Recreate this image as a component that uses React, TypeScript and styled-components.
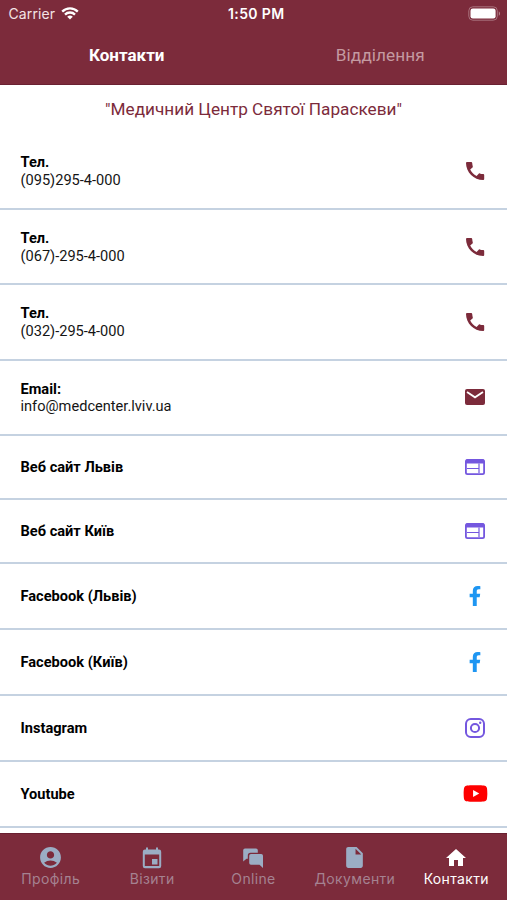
import React from "react";
import styled, { createGlobalStyle } from "styled-components";
import { MdAccountCircle, MdInsertDriveFile, MdHome } from "react-icons/md";
import { FaFacebookF, FaYoutube } from "react-icons/fa";

const Global = createGlobalStyle`
  * { box-sizing: border-box; }
  body { margin: 0; background: #fff; }
`;

const Screen = styled.div`
  width: 507px;
  height: 900px;
  display: flex;
  flex-direction: column;
  overflow: hidden;
  background: #fff;
  font-family: Roboto, sans-serif;
`;

const Header = styled.header`
  height: 84.5px;
  flex: none;
  background: #7c2b3b;
  border-bottom: 1px solid #6a2132;
`;

const StatusBar = styled.div`
  height: 27px;
  padding: 0 6px 0 8.5px;
  display: grid;
  grid-template-columns: 1fr auto 1fr;
  align-items: center;
  font-family: Inter, sans-serif;
  font-size: 14px;
  color: #f3e4e5;
`;

const Carrier = styled.div`
  display: flex;
  align-items: center;
  gap: 6px;
  letter-spacing: 0.1px;
`;

const Clock = styled.div`
  padding-left: 3px;
  font-weight: 600;
  letter-spacing: 0.35px;
  color: #fff;
`;

const Battery = styled.svg`
  justify-self: end;
  display: block;
`;

const TopTabs = styled.nav`
  height: 55px;
  display: grid;
  grid-template-columns: 1fr 1fr;
  align-items: center;
  text-align: center;
`;

const TopTab = styled.span<{ $active?: boolean }>`
  font-size: ${(p) => (p.$active ? "17px" : "17.2px")};
  letter-spacing: ${(p) => (p.$active ? "0" : "0.05px")};
  font-weight: ${(p) => (p.$active ? 700 : 400)};
  color: ${(p) => (p.$active ? "#fff" : "#c49aa1")};
`;

const Title = styled.h1`
  margin: 0;
  height: 49.5px;
  flex: none;
  line-height: 49px;
  text-align: center;
  font-size: 17.2px;
  font-weight: 400;
  color: #7c2b3b;
`;

const List = styled.div`
  flex: 1;
  min-height: 0;
`;

const Row = styled.div<{ $height: number }>`
  height: ${(p) => p.$height}px;
  padding: 0 19.5px 0 20.5px;
  display: flex;
  align-items: center;
  justify-content: space-between;
  border-bottom: 2px solid #c5d2e1;
`;

const RowText = styled.div`
  padding-top: 2px;
  font-size: 14.6px;
  line-height: 17.6px;
  color: #151515;
`;

const Label = styled.div`
  font-weight: 700;
  color: #000;
`;

const IconSlot = styled.div<{ $color: string }>`
  width: 25px;
  display: flex;
  justify-content: center;
  color: ${(p) => p.$color};
`;

const BottomBar = styled.nav`
  height: 67.5px;
  flex: none;
  padding-top: 12px;
  display: grid;
  grid-template-columns: repeat(5, 1fr);
  background: #7c2b3b;
  border-top: 1px solid #692031;
`;

const BottomTab = styled.div<{ $active?: boolean }>`
  display: flex;
  flex-direction: column;
  align-items: center;
  font-family: Inter, sans-serif;
  font-size: 14px;
  line-height: 17px;
  letter-spacing: 0.35px;
  white-space: nowrap;
  color: ${(p) => (p.$active ? "#fff" : "#a58291")};
  svg { color: ${(p) => (p.$active ? "#fff" : "#9badc4")}; }
`;

const TabIcon = styled.div`
  height: 24px;
  display: flex;
  align-items: center;
`;

const WifiIcon = () => (
  <svg width="18" height="13" viewBox="0 0 18 13" fill="none" stroke="#fff" strokeWidth="2.3">
    <path d="M1.2 4.6a11 11 0 0 1 15.6 0M4 7.6a7 7 0 0 1 10 0" />
    <path d="M9 12.6 6.2 9.8a4 4 0 0 1 5.6 0z" fill="#fff" stroke="none" />
  </svg>
);

const PhoneIcon = () => (
  <svg width="24" height="24" viewBox="0 0 24 24" fill="currentColor">
    <path d="M4 3h4.2a1 1 0 0 1 1 .9c.1 1.2.3 2.4.6 3.5.1.4 0 .8-.3 1L7.2 10.6c1.4 2.9 3.5 5 6.4 6.4l2.1-2.3c.3-.3.7-.4 1-.3 1.100.4 2.300.6 3.500.6a1 1 0 0 1 1 1V20a1 1 0 0 1-1 1C10.800 21 3 13.200 3 4a1 1 0 0 1 1-1z" />
  </svg>
);

const MailIcon = () => (
  <svg width="24" height="24" viewBox="0 0 24 24" fill="currentColor">
    <rect x="2" y="4" width="20" height="16" rx="2" />
    <path d="m4 7 8 5.300L20 7" fill="none" stroke="#fff" strokeWidth="1.8" />
  </svg>
);

const WebIcon = () => (
  <svg width="24" height="24" viewBox="0 0 24 24" fill="none" stroke="currentColor">
    <rect x="2.900" y="4.900" width="18.200" height="14.200" rx="1.600" strokeWidth="1.800" />
    <path d="M3 6.500h18" strokeWidth="4" />
    <path d="M4 13.500h12M16 8.500V18" strokeWidth="1.200" />
  </svg>
);

const InstagramIcon = () => (
  <svg width="20" height="20" viewBox="0 0 20 20" fill="none" stroke="currentColor" strokeWidth="2">
    <rect x="1" y="1" width="18" height="18" rx="4.800" />
    <circle cx="10" cy="10" r="4.100" />
    <circle cx="15.200" cy="4.800" r="1.200" fill="currentColor" stroke="none" />
  </svg>
);

const CalendarIcon = () => (
  <svg width="24" height="24" viewBox="0 0 24 24" fill="currentColor" fillRule="evenodd">
    <path d="M6 1.500h2v2h8v-2h2v2h1a2.200 2.200 0 0 1 2.200 2.200V20a2.200 2.200 0 0 1-2.200 2.200H5A2.200 2.200 0 0 1 2.800 20V5.700A2.200 2.200 0 0 1 5 3.500h1zM4.800 8.500V20h14.400V8.500zM12 13h5.500v5.500H12z" />
  </svg>
);

const ChatsIcon = () => (
  <svg width="24" height="24" viewBox="0 0 24 24" fill="currentColor">
    <path d="M4 2.500h11A1.800 1.800 0 0 1 16.800 4.300V6.800H9.500A2.700 2.700 0 0 0 6.800 9.500v3.300H5.500L2.200 15.500V4.300A1.800 1.800 0 0 1 4 2.500z" />
    <path d="M10 8h10.200A1.800 1.800 0 0 1 22 9.800V22l-3.500-3.200H10A1.800 1.800 0 0 1 8.200 17V9.800A1.800 1.800 0 0 1 10 8z" />
  </svg>
);

const WINE = "#7c2b3b";
const VIOLET = "#7457df";
const BLUE = "#1e96f2";

const rows = [
  { label: "Тел.", value: "(095)295-4-000", height: 76, color: WINE, icon: <PhoneIcon /> },
  { label: "Тел.", value: "(067)-295-4-000", height: 75.3, color: WINE, icon: <PhoneIcon /> },
  { label: "Тел.", value: "(032)-295-4-000", height: 75.3, color: WINE, icon: <PhoneIcon /> },
  { label: "Email:", value: "info@medcenter.lviv.ua", height: 75.3, color: WINE, icon: <MailIcon /> },
  { label: "Веб сайт Львів", height: 64, color: VIOLET, icon: <WebIcon /> },
  { label: "Веб сайт Київ", height: 64, color: VIOLET, icon: <WebIcon /> },
  { label: "Facebook (Львів)", height: 66, color: BLUE, icon: <FaFacebookF size={20} /> },
  { label: "Facebook (Київ)", height: 66, color: BLUE, icon: <FaFacebookF size={20} /> },
  { label: "Instagram", height: 66, color: VIOLET, icon: <InstagramIcon /> },
  { label: "Youtube", height: 66, color: "#fe0000", icon: <FaYoutube size={25} /> },
];

const tabs = [
  { label: "Профіль", icon: <MdAccountCircle size={25} /> },
  { label: "Візити", icon: <CalendarIcon /> },
  { label: "Online", icon: <ChatsIcon /> },
  { label: "Документи", icon: <MdInsertDriveFile size={25} /> },
  { label: "Контакти", icon: <MdHome size={24} />, active: true },
];

export default function App() {
  return (
    <Screen>
      <Global />
      <Header>
        <StatusBar>
          <Carrier>Carrier <WifiIcon /></Carrier>
          <Clock>1:50 PM</Clock>
          <Battery width="33" height="15" viewBox="0 0 33 15">
            <rect x="0.8" y="0.8" width="28.5" height="13.4" rx="4" fill="none" stroke="#a9727d" />
            <rect x="2.5" y="2.5" width="25.1" height="10" rx="2.3" fill="#fff" />
            <path d="M30.8 5.2c1.6.7 1.6 3.9 0 4.6z" fill="#b98990" />
          </Battery>
        </StatusBar>
        <TopTabs>
          <TopTab $active>Контакти</TopTab>
          <TopTab>Відділення</TopTab>
        </TopTabs>
      </Header>
      <Title>"Медичний Центр Святої Параскеви"</Title>
      <List>
        {rows.map((row, i) => (
          <Row key={i} $height={row.height}>
            <RowText>
              <Label>{row.label}</Label>
              {row.value}
            </RowText>
            <IconSlot $color={row.color}>{row.icon}</IconSlot>
          </Row>
        ))}
      </List>
      <BottomBar>
        {tabs.map((tab) => (
          <BottomTab key={tab.label} $active={tab.active}>
            <TabIcon>{tab.icon}</TabIcon>
            {tab.label}
          </BottomTab>
        ))}
      </BottomBar>
    </Screen>
  );
}
